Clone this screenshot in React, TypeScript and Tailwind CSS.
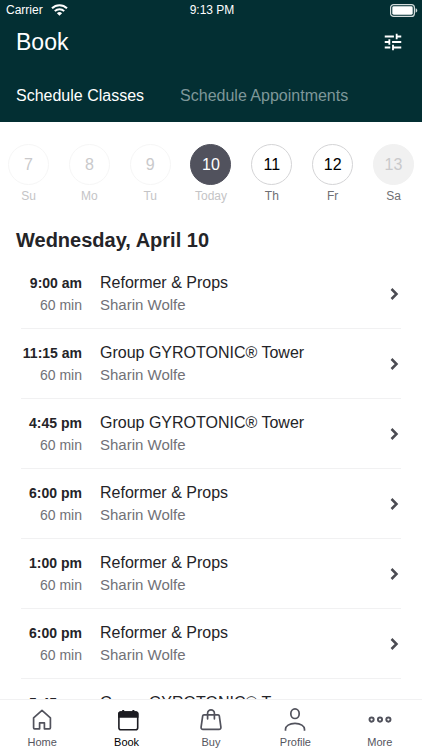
import { MdTune } from "react-icons/md";

type Day = { num: number; label: string; circle: string; text: string };

const past = "border-[#f6f6f6] text-[#c9c9cb]";
const open = "border-[#d4d4d6] text-black";

const days: Day[] = [
  { num: 7, label: "Su", circle: past, text: "text-[#c4c4c6]" },
  { num: 8, label: "Mo", circle: past, text: "text-[#c4c4c6]" },
  { num: 9, label: "Tu", circle: past, text: "text-[#c4c4c6]" },
  { num: 10, label: "Today", circle: "border-[#51525d] bg-[#51525d] text-white", text: "text-[#c4c4c6]" },
  { num: 11, label: "Th", circle: open, text: "text-[#6f6f73]" },
  { num: 12, label: "Fr", circle: open, text: "text-[#6f6f73]" },
  { num: 13, label: "Sa", circle: "border-[#f1f1f1] bg-[#f1f1f1] text-[#c9c9cb]", text: "text-[#6f6f73]" },
];

const classes = [
  { time: "9:00 am", name: "Reformer & Props" },
  { time: "11:15 am", name: "Group GYROTONIC® Tower" },
  { time: "4:45 pm", name: "Group GYROTONIC® Tower" },
  { time: "6:00 pm", name: "Reformer & Props" },
  { time: "1:00 pm", name: "Reformer & Props" },
  { time: "6:00 pm", name: "Reformer & Props" },
  { time: "5:45 pm", name: "Group GYROTONIC® Tower" },
];

function WifiIcon() {
  return (
    <svg width="17" height="12" viewBox="0 0 17 12" fill="none" stroke="white" strokeWidth="2" aria-hidden="true">
      <path d="M1 4.3a10.6 10.6 0 0 1 15 0" />
      <path d="M3.8 7.1a6.7 6.7 0 0 1 9.4 0" />
      <path d="M8.5 11.8 5.9 9.2a3.7 3.7 0 0 1 5.2 0z" fill="white" stroke="none" />
    </svg>
  );
}

function BatteryIcon() {
  return (
    <svg width="28" height="13" viewBox="0 0 28 13" aria-hidden="true">
      <rect x="0.6" y="0.6" width="23.8" height="11.8" rx="3" fill="none" stroke="#d5dddd" strokeWidth="1.2" />
      <rect x="2.3" y="2.3" width="20.4" height="8.4" rx="1.4" fill="white" />
      <path d="M25.6 4.3c2.2.7 2.2 3.7 0 4.4z" fill="#d5dddd" />
    </svg>
  );
}

function HomeIcon() {
  return (
    <svg width="24" height="24" viewBox="0 0 24 24" fill="none" stroke="#51525c" strokeWidth="1.7" strokeLinejoin="round" aria-hidden="true">
      <path d="M12 3.4 3.6 10.800v10c0 .7.4 1 1 1h5v-6h4.800v6h5c.6 0 1-.3 1-1v-10z" />
    </svg>
  );
}

function BookIcon() {
  return (
    <svg width="24" height="24" viewBox="0 0 24 24" fill="none" stroke="#1c1c22" strokeWidth="1.6" aria-hidden="true">
      <rect x="3.900" y="5" width="18.800" height="17.800" rx="2" />
      <path d="M3.900 10V7a2 2 0 0 1 2-2h14.800a2 2 0 0 1 2 2v3z" fill="#1c1c22" />
      <path d="M8.200 3v3M18.400 3v3" strokeWidth="2" />
    </svg>
  );
}

function BuyIcon() {
  return (
    <svg width="24" height="24" viewBox="0 0 24 24" fill="none" stroke="#51525c" strokeWidth="1.7" strokeLinecap="round" strokeLinejoin="round" aria-hidden="true">
      <path d="M5 7.800h14c.8 0 1.200.4 1.300 1.100l1.600 11.200c.2 1.400-.6 2.300-1.900 2.300H4c-1.300 0-2.100-.9-1.900-2.300L3.700 8.900c.1-.7.500-1.100 1.300-1.100z" />
      <path d="M8.600 11.800V6.300a3.400 3.400 0 0 1 6.800 0v5.500" />
    </svg>
  );
}

function ProfileIcon() {
  return (
    <svg width="24" height="24" viewBox="0 0 24 24" fill="none" stroke="#51525c" strokeWidth="1.7" aria-hidden="true">
      <ellipse cx="12" cy="6.700" rx="4.200" ry="4.800" />
      <path d="M2.500 23.800v-1.500c0-3.200 3.800-5.900 9.500-5.900s9.500 2.700 9.500 5.900v1.500" />
    </svg>
  );
}

function MoreIcon() {
  return (
    <svg width="24" height="24" viewBox="0 0 24 24" fill="none" stroke="#51525c" strokeWidth="1.900" aria-hidden="true">
      <circle cx="3.600" cy="12.600" r="2.100" />
      <circle cx="12" cy="12.600" r="2.100" />
      <circle cx="20.400" cy="12.600" r="2.100" />
    </svg>
  );
}

const nav = [
  { label: "Home", Icon: HomeIcon, active: false },
  { label: "Book", Icon: BookIcon, active: true },
  { label: "Buy", Icon: BuyIcon, active: false },
  { label: "Profile", Icon: ProfileIcon, active: false },
  { label: "More", Icon: MoreIcon, active: false },
];

export default function App() {
  return (
    <div className="flex h-screen flex-col overflow-hidden bg-white font-['Liberation_Sans',Arial,sans-serif] text-[#242428]">
      <header className="shrink-0 bg-[#032f33] text-white">
        <div className="grid h-5 grid-cols-3 items-center pr-1 pl-1.5 text-xs">
          <div className="flex items-center gap-2">
            <span>Carrier</span>
            <WifiIcon />
          </div>
          <span className="text-center">9:13 PM</span>
          <div className="flex justify-end">
            <BatteryIcon />
          </div>
        </div>
        <div className="flex h-11 items-center justify-between pr-[18px] pl-4">
          <h1 className="text-[23px]">Book</h1>
          <button aria-label="Filter">
            <MdTune size={22} />
          </button>
        </div>
        <div className="flex h-[58px] items-center gap-9 px-4 pt-1.5 text-base">
          <button>Schedule Classes</button>
          <button className="text-[#7e9799]">Schedule Appointments</button>
        </div>
      </header>

      <main className="min-h-0 flex-1 overflow-hidden">
        <div className="flex justify-between px-2 pt-[22px]">
          {days.map((d) => (
            <button key={d.num} className="flex w-[41px] flex-col items-center gap-[3px]">
              <span className={`flex size-[41px] items-center justify-center rounded-full border text-base ${d.circle}`}>
                {d.num}
              </span>
              <span className={`text-xs leading-4 ${d.text}`}>{d.label}</span>
            </button>
          ))}
        </div>
        <h2 className="mt-5 mb-[3px] px-4 text-xl leading-8 font-bold">Wednesday, April 10</h2>
        <ul className="px-[21px]">
          {classes.map((c, i) => (
            <li key={i} className="border-b border-[#f1f1f2]">
              <button className="flex h-[69px] w-full items-center text-left">
                <span className="w-[61px] shrink-0 text-right whitespace-nowrap">
                  <span className="block text-sm leading-[22px] font-bold">{c.time}</span>
                  <span className="block text-sm leading-[22px] text-[#717177]">60 min</span>
                </span>
                <span className="ml-[18px] flex-1">
                  <span className="block text-base leading-[22px]">{c.name}</span>
                  <span className="block text-[15px] leading-[22px] text-[#717177]">Sharin Wolfe</span>
                </span>
                <svg width="14" height="14" viewBox="0 0 14 14" fill="none" stroke="#4b4b52" strokeWidth="2.500" aria-hidden="true">
                  <path d="m4.500 2 5 5-5 5" />
                </svg>
              </button>
            </li>
          ))}
        </ul>
      </main>

      <nav className="grid h-[51px] shrink-0 grid-cols-5 border-t border-[#f1f1f2] bg-white">
        {nav.map(({ label, Icon, active }) => (
          <button
            key={label}
            className={`flex flex-col items-center pt-[7px] text-[11px] leading-[22px] ${active ? "text-black" : "text-[#55555e]"}`}
          >
            <Icon />
            {label}
          </button>
        ))}
      </nav>
    </div>
  );
}
